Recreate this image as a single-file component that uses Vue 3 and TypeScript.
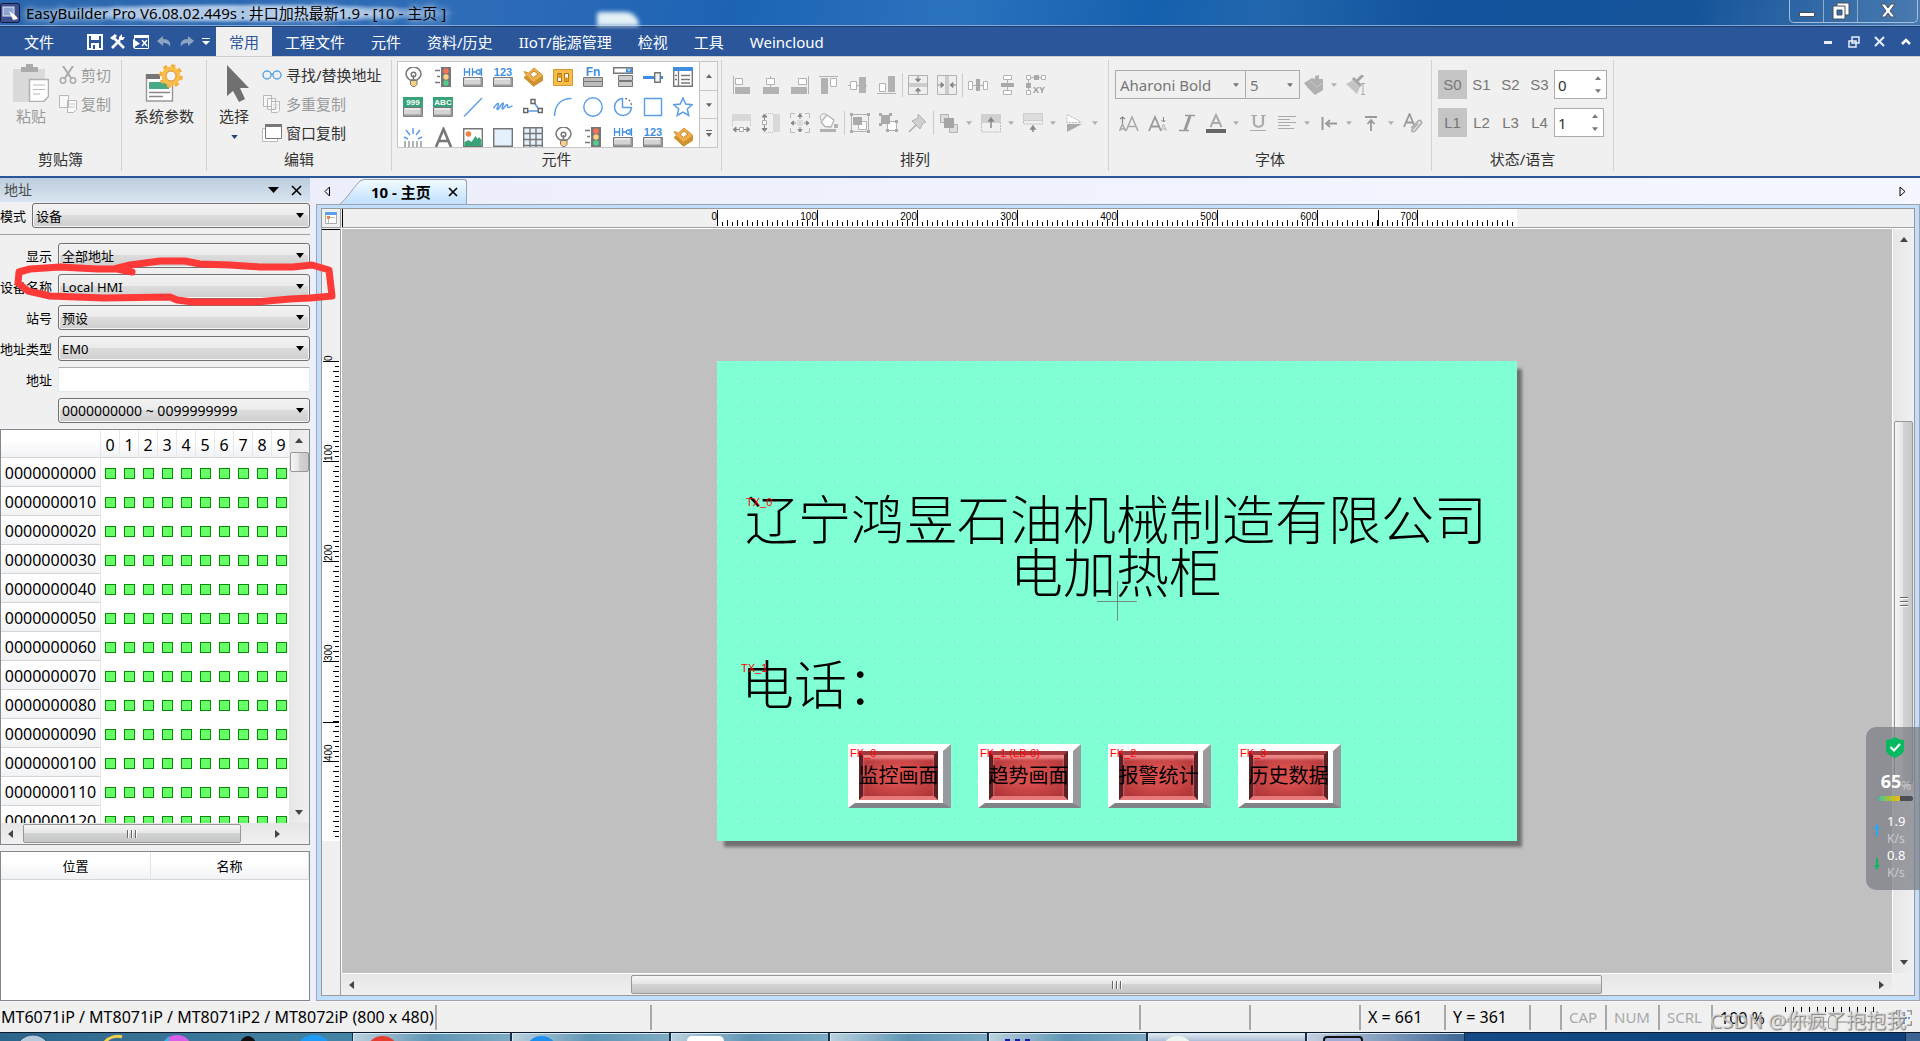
<script setup lang="ts">
interface Tool {
  icon: string
  label: string
  menu?: boolean
}

const menus: string[] = ['工程文件', '元件', '资料/历史', 'IIoT/能源管理', '检视', '工具', 'Weincloud']

const galleryIcons: string[] = [
  'bulb', 'traffic', 'setword', 'num', 'tag', 'toggle', 'fn', 'combo', 'slider', 'list',
  'n999', 'abc', 'line', 'wave', 'poly', 'arc', 'circle', 'pie', 'rect', 'star',
  'scale', 'letter', 'picture', 'frame', 'table', 'bulb', 'traffic', 'setword', 'num', 'tag',
]

const arrangeTop: Tool[][] = [
  [
    { icon: 'al-left', label: '靠左' }, { icon: 'al-center', label: '水平居中' }, { icon: 'al-right', label: '靠右' },
    { icon: 'al-top', label: '靠上' }, { icon: 'al-mid', label: '垂直居中' }, { icon: 'al-bottom', label: '靠下' },
  ],
  [{ icon: 'cen-v', label: '页面垂直居中' }, { icon: 'cen-h', label: '页面水平居中' }],
  [{ icon: 'dist-h', label: '水平等距' }, { icon: 'dist-v', label: '垂直等距' }, { icon: 'xy', label: '坐标' }],
]

const arrangeBottom: Tool[][] = [
  [
    { icon: 'same-w', label: '等宽' }, { icon: 'same-h', label: '等高' },
    { icon: 'same-wh', label: '等宽高' }, { icon: 'bucket', label: '填充' },
  ],
  [{ icon: 'group', label: '群组' }, { icon: 'ungroup', label: '取消群组' }, { icon: 'pin', label: '固定' }],
  [
    { icon: 'layer', label: '图层', menu: true }, { icon: 'lay-up', label: '上移', menu: true },
    { icon: 'lay-down', label: '下移', menu: true }, { icon: 'flip', label: '翻转', menu: true },
  ],
]

const fontTools: Tool[] = [
  { icon: 'grow', label: '放大' }, { icon: 'shrink', label: '缩小' }, { icon: 'italic', label: '斜体' },
  { icon: 'color', label: '颜色', menu: true }, { icon: 'under', label: '底线' },
  { icon: 'align', label: '对齐', menu: true }, { icon: 'indent', label: '左对齐', menu: true },
  { icon: 'vtop', label: '上对齐', menu: true }, { icon: 'fontset', label: '字型' },
]

const fields = [
  { id: 'show', label: '显示', value: '全部地址' },
  { id: 'device', label: '设备名称', value: 'Local HMI' },
  { id: 'station', label: '站号', value: '预设' },
  { id: 'type', label: '地址类型', value: 'EM0' },
]

const rows: string[] = Array.from({ length: 13 }, (_, i) => String(i * 10).padStart(10, '0'))
const digits: number[] = Array.from({ length: 10 }, (_, i) => i)

const tickPath = (length: number, vertical: boolean): string => {
  let d = ''
  for (let p = 0; p < length; p += 5) {
    const h = p % 100 === 0 ? 16 : p % 10 === 0 ? 6 : 4
    d += vertical ? `M${17 - h} ${p}h${h}v1h-${h}z` : `M${p} ${17 - h}h1v${h}h-1z`
  }
  return d
}
const topTicks = tickPath(800, false)
const leftTicks = tickPath(480, true)
const topLabels = [0, 100, 200, 300, 400, 500, 600, 700]
const leftLabels = [0, 100, 200, 300, 400]

const keys = [
  { tag: 'FK_0', text: '监控画面' },
  { tag: 'FK_1 (LB-0)', text: '趋势画面' },
  { tag: 'FK_2', text: '报警统计' },
  { tag: 'FK_3', text: '历史数据' },
]

const zoomTicks = Array.from({ length: 12 }, (_, i) => i * 8)
</script>

<template>
  <svg class="defs" aria-hidden="true">
    <symbol id="dn" viewBox="0 0 8 5"><path d="M0 0h8L4 5z" fill="currentColor" /></symbol>
    <symbol id="up" viewBox="0 0 8 5"><path d="M0 5h8L4 0z" fill="currentColor" /></symbol>

    <symbol id="bulb" viewBox="0 0 20 20">
      <path d="M7 13C4.500 11 3 9.500 3 7a7 6.500 0 0 1 15 0c0 2.500-1.500 4-4 6z" fill="#fff" stroke="#777" stroke-width="1.500" />
      <circle cx="10.500" cy="7.500" r="2.300" fill="none" stroke="#777" stroke-width="1.500" /><path d="M10.500 8v5" stroke="#777" stroke-width="1.500" />
      <path d="M7.500 13.500h6.500v4l-2 2h-2.500l-2-2z" fill="#ffcf85" stroke="#777" />
    </symbol>
    <symbol id="traffic" viewBox="0 0 20 20">
      <path d="M2 3.500h5M4 9.500h3M2 15.500h5" stroke="#777" stroke-width="1.500" /><path d="M8 0h10v20H8z" fill="#777" />
      <circle cx="13" cy="4" r="2.700" fill="#ff7058" /><circle cx="13" cy="10" r="2.700" fill="#ffcf85" /><circle cx="13" cy="16" r="2.700" fill="#4cd08c" />
    </symbol>
    <symbol id="key" viewBox="0 0 20 20">
      <path d="M.5 10.500h19v9H.5z" fill="#d4d4d4" stroke="#777" /><path d="M1 18.500h18M18.500 11v8" stroke="#999" stroke-width="2" /><path d="M2 11.500h15v1H2z" fill="#fff" />
    </symbol>
    <symbol id="setword" viewBox="0 0 20 20">
      <path d="M1.500 1v8M1.500 5h5M6.500 1v8M9.500 1v8M9.500 5h4M13.500 3v4M14 3h3v4h-3M18.500 1v8" stroke="#3f8fde" stroke-width="1.300" fill="none" /><use href="#key" />
    </symbol>
    <symbol id="num" viewBox="0 0 20 20"><text x="10" y="9" text-anchor="middle" class="g10" fill="#3f8fde">123</text><use href="#key" /></symbol>
    <symbol id="tag" viewBox="0 0 20 20">
      <path d="M1 4.500 5.500 6 11 1l8.500 7v5.500L10.500 19 1 10.500 3.500 8.500z" fill="#efb04a" stroke="#d0922f" />
      <path d="m7 7.500 4-3.500 4 3-4.500 3.500z" fill="#fff" stroke="#c78726" /><path d="m3.500 8.500 7 6.500 9-6.500v5l-9 6L1 10.500z" fill="#cf9233" />
    </symbol>
    <symbol id="toggle" viewBox="0 0 20 20">
      <path d="M.5 2.500h19v16H.5z" fill="#fbbd4a" stroke="#d39a31" /><path d="M4.500 6.500h4v8h-4zM11.500 6.500h4v8h-4z" fill="#fff" stroke="#a66f12" /><path d="M4.500 7h4v4h-4zM11.500 10.500h4v4h-4z" fill="#d99a2b" />
    </symbol>
    <symbol id="fn" viewBox="0 0 20 20">
      <text x="10" y="9" text-anchor="middle" class="g12" fill="#3f8fde">Fn</text><path d="M.5 10.500h19v9H.5z" fill="#bbb" stroke="#777" /><path d="M0 14.500h20" stroke="#777" />
    </symbol>
    <symbol id="combo" viewBox="0 0 20 20">
      <path d="M.7.700h18.600v5.600H.7z" fill="#fff" stroke="#777" stroke-width="1.400" /><path d="M13 1.500h6v4h-6z" fill="#3f8fde" /><path d="m14.500 2.500 1.500 2 1.500-2z" fill="#fff" />
      <path d="M5.500 8.500h14v5h-14zM5.500 14.500h14v5h-14z" fill="#ccc" stroke="#777" />
    </symbol>
    <symbol id="slider" viewBox="0 0 20 20"><path d="M0 9h20v3H0z" fill="#3f8fde" /><path d="M11.700 5.700h5.600v9.600h-5.600z" fill="#f1f1f1" stroke="#777" stroke-width="1.400" /></symbol>
    <symbol id="list" viewBox="0 0 20 20">
      <path d="M.7 1.700h18.600v17.600H.7z" fill="#fff" stroke="#777" stroke-width="1.400" /><path d="M0 0h20v4H0z" fill="#3f8fde" />
      <path d="M5.500 4v15M8 8.500h9M8 12.500h9M8 16h9M2 8.500h2M2 12.500h2" stroke="#777" stroke-width="1.300" />
    </symbol>
    <symbol id="n999" viewBox="0 0 20 20"><path d="M0 0h20v10H0z" fill="#36a378" /><text x="10" y="8" text-anchor="middle" class="g8" fill="#fff">999</text><use href="#key" /></symbol>
    <symbol id="abc" viewBox="0 0 20 20"><path d="M0 0h20v10H0z" fill="#36a378" /><text x="10" y="8" text-anchor="middle" class="g8" fill="#fff">ABC</text><use href="#key" /></symbol>
    <symbol id="line" viewBox="0 0 20 20"><path d="M1 19.500 19 1" stroke="#5b9ee6" stroke-width="1.400" /></symbol>
    <symbol id="wave" viewBox="0 0 20 20"><path d="M.5 11.500C3 7 5.500 5.500 5.500 7s-2.500 5.500-1 5.500S8.500 6 10 6s-2 6-.5 6 3-4.500 4.500-4.500-.5 3 1.500 3 2-1.500 4-1.500" fill="none" stroke="#5b9ee6" stroke-width="1.500" /></symbol>
    <symbol id="poly" viewBox="0 0 20 20"><path d="M3 14h14M10 4l7 10" stroke="#5b9ee6" stroke-width="1.500" /><path d="M8 2.500h4v4H8zM.7 11.500h4v4h-4zM15.300 11.500h4v4h-4z" fill="#fff" stroke="#666" stroke-width="1.400" /></symbol>
    <symbol id="arc" viewBox="0 0 20 20"><path d="M1.500 19C2 8 8 1.500 18.500 1.500" fill="none" stroke="#5b9ee6" stroke-width="1.500" /></symbol>
    <symbol id="circle" viewBox="0 0 20 20"><circle cx="10" cy="10" r="9.200" fill="none" stroke="#5b9ee6" stroke-width="1.400" /></symbol>
    <symbol id="pie" viewBox="0 0 20 20"><path d="M9.500 1.500a8.500 8.500 0 1 0 9 9h-9z" fill="none" stroke="#5b9ee6" stroke-width="1.500" /><path d="M12 1.500c3.500 0 6 3 6.500 7" fill="none" stroke="#777" stroke-dasharray="2 2" stroke-width="1.300" /></symbol>
    <symbol id="rect" viewBox="0 0 20 20"><path d="M1.500 1.500h17v17h-17z" fill="none" stroke="#5b9ee6" stroke-width="1.400" /></symbol>
    <symbol id="star" viewBox="0 0 20 20"><path d="m10 1 2.700 6 6.500.7-4.900 4.300 1.400 6.500-5.700-3.400-5.700 3.400L5.700 12 .8 7.700 7.300 7z" fill="#fff" stroke="#5b9ee6" stroke-width="1.500" /></symbol>
    <symbol id="scale" viewBox="0 0 20 20"><path d="M10 1v6M3 3l4 5M17 3l-4 5M1 10l4 2M19 10l-4 2" stroke="#5b9ee6" stroke-width="1.500" /><path d="M2 20v-6M6 20v-6M10 20v-6M14 20v-6M18 20v-6" stroke="#999" stroke-width="1.500" /></symbol>
    <symbol id="letter" viewBox="0 0 20 20"><path d="M3 20 10.500 2 18 20M6 14h9" fill="none" stroke="#777" stroke-width="2.600" /></symbol>
    <symbol id="picture" viewBox="0 0 20 20"><path d="M.7 1.700h18.600v17.600H.7z" fill="#fff" stroke="#777" stroke-width="1.400" /><circle cx="5.500" cy="7" r="2.800" fill="#e98444" /><path d="M1.500 19v-4l4-2 3 2 4-6 2 3 1.500-2 2.500 3v6z" fill="#36a378" /></symbol>
    <symbol id="frame" viewBox="0 0 20 20"><path d="M.7 1.700h18.600v17.600H.7z" fill="#e4f0fc" stroke="#777" stroke-width="1.400" /></symbol>
    <symbol id="table" viewBox="0 0 20 20"><path d="M.7.700h18.600v20H.7zM1 6.500h18M1 12.500h18M1 18.500h18M7 1v19M13 1v19" fill="#e4f0fc" stroke="#777" stroke-width="1.400" /></symbol>

    <symbol id="al-left" viewBox="0 0 20 20"><path d="M1.500 1v18" stroke="#b2b2b2" /><path d="M3.500 3.500h7v6h-7z" fill="#fff" stroke="#b2b2b2" /><path d="M3 12h15v7H3z" fill="#b2b2b2" /></symbol>
    <symbol id="al-center" viewBox="0 0 20 20"><path d="M9.500 1v18" stroke="#b2b2b2" /><path d="M5.500 3.500h8v6h-8z" fill="#fff" stroke="#b2b2b2" /><path d="M2 12h16v7H2z" fill="#b2b2b2" /></symbol>
    <symbol id="al-right" viewBox="0 0 20 20"><path d="M18.500 1v18" stroke="#b2b2b2" /><path d="M8.500 3.500h8v6h-8z" fill="#fff" stroke="#b2b2b2" /><path d="M1 12h16v7H1z" fill="#b2b2b2" /></symbol>
    <symbol id="al-top" viewBox="0 0 20 20"><path d="M0 1.500h19" stroke="#b2b2b2" /><path d="M11.500 3.500h6v8h-6z" fill="#fff" stroke="#b2b2b2" /><path d="M2 3h7v16H2z" fill="#b2b2b2" /></symbol>
    <symbol id="al-mid" viewBox="0 0 20 20"><path d="M0 10.500h19" stroke="#b2b2b2" /><path d="M2.500 6.500h6v8h-6z" fill="#fff" stroke="#b2b2b2" /><path d="M11 2h7v16h-7z" fill="#b2b2b2" /></symbol>
    <symbol id="al-bottom" viewBox="0 0 20 20"><path d="M0 18.500h19" stroke="#b2b2b2" /><path d="M2.500 8.500h6v8h-6z" fill="#fff" stroke="#b2b2b2" /><path d="M11 1h7v16h-7z" fill="#b2b2b2" /></symbol>
    <symbol id="cen-v" viewBox="0 0 20 20"><path d="M.5.500h19v19H.5z" fill="#eee" stroke="#b2b2b2" /><path d="M1 8h18v4H1z" fill="#ccc" /><path d="M10 1v5M7.500 4 10 7l2.500-3zM10 19v-5M7.500 16l2.500-3 2.500 3z" fill="#888" stroke="#888" /></symbol>
    <symbol id="cen-h" viewBox="0 0 20 20"><path d="M.5.500h19v19H.5z" fill="#eee" stroke="#b2b2b2" /><path d="M8 1h4v18H8z" fill="#ccc" /><path d="M1 10h5M4 7.500 7 10l-3 2.500zM19 10h-5M16 7.500 13 10l3 2.500z" fill="#888" stroke="#888" /></symbol>
    <symbol id="dist-h" viewBox="0 0 20 20"><path d="M0 10.500h20" stroke="#b2b2b2" /><path d="M.5 6.500h4v8h-4zM15.500 6.500h4v8h-4z" fill="#fff" stroke="#b2b2b2" /><path d="M8 4h4v12H8z" fill="#aaa" /></symbol>
    <symbol id="dist-v" viewBox="0 0 20 20"><path d="M10.500 0v20" stroke="#b2b2b2" /><path d="M6.500.500h8v4h-8zM6.500 15.500h8v4h-8z" fill="#fff" stroke="#b2b2b2" /><path d="M4 8h13v4H4z" fill="#aaa" /></symbol>
    <symbol id="xy" viewBox="0 0 20 20"><path d="M2.500 2v16M2 2.500h16" stroke="#b2b2b2" /><path d="M.5.500h4v4h-4zM15.500.500h4v4h-4zM.5 15.500h4v4h-4z" fill="#fff" stroke="#b2b2b2" /><path d="M8 0h5v5H8zM0 8h5v5H0z" fill="#aaa" /><text x="13" y="18" text-anchor="middle" class="g9" fill="#999">XY</text></symbol>
    <symbol id="same-w" viewBox="0 0 20 20"><path d="M0 1h19v7H0z" fill="#d8d8d8" /><path d="M.5 8v5M18.500 8v5" stroke="#bbb" stroke-dasharray="1 1" /><path d="M2 16.500h15M4 14l-3 2.500L4 19zM15 14l3 2.500-3 2.500z" stroke="#888" fill="#888" /><path d="M7.500 14.500h4v4h-4z" fill="#fff" stroke="#aaa" /></symbol>
    <symbol id="same-h" viewBox="0 0 20 20"><path d="M12 1h7v18h-7z" fill="#d8d8d8" /><path d="M5 .5h7M5 19.500h7" stroke="#bbb" stroke-dasharray="1 1" /><path d="M3.500 2v15M1 4l2.500-3L6 4zM1 15.500l2.500 3 2.500-3z" stroke="#888" fill="#888" /><path d="M1.500 7.500h4v4h-4z" fill="#fff" stroke="#aaa" /></symbol>
    <symbol id="same-wh" viewBox="0 0 20 20"><path d="M.5 5V.5H5M9 .5h3M15 .5h4.500V5M19.500 15v4.500H15M5 19.500H.5V15" fill="none" stroke="#bbb" /><path d="M7 7h6v6H7z" fill="#ddd" /><path d="M10 1v5M8 3.500 10 1l2 2.500zM10 19v-5M8 16.500l2 2.500 2-2.500zM1 10h5M3.500 8 1 10l2.500 2zM19 10h-5M16.500 8l2.500 2-2.500 2z" stroke="#888" fill="#888" /></symbol>
    <symbol id="bucket" viewBox="0 0 20 20"><path d="m2 9 6-7 7 5-3 7-6-.5z" fill="#fff" stroke="#b2b2b2" stroke-width="1.300" /><path d="M2 7C-1 2 4-1 8 2" fill="none" stroke="#b2b2b2" /><path d="M15 11h4v4h-4zM1 16h16v3H1z" fill="#b2b2b2" /></symbol>
    <symbol id="group" viewBox="0 0 20 20"><path d="M1.500 1.500h17v17h-17z" fill="none" stroke="#b2b2b2" /><path d="M0 0h3v3H0zM17 0h3v3h-3zM0 17h3v3H0zM17 17h3v3h-3z" fill="#aaa" /><path d="M8.500 8.500h8v8h-8z" fill="#fff" stroke="#b2b2b2" /><path d="M3 4h9v8H3z" fill="#aaa" /></symbol>
    <symbol id="ungroup" viewBox="0 0 20 20"><path d="M8.500 8.500h9v9h-9z" fill="#fff" stroke="#b2b2b2" /><path d="M2 2h9v9H2zM0 0h3v3H0zM10 0h3v3h-3zM0 10h3v3H0zM16 7h3v3h-3zM7 16h3v3H7zM16 16h3v3h-3z" fill="#aaa" /></symbol>
    <symbol id="pin" viewBox="0 0 20 20"><path d="m1 19 8-8" stroke="#aaa" stroke-width="1.500" /><path d="m10 1 8 8-3 1-3 6-8-8 6-3z" fill="#d0d0d0" stroke="#b2b2b2" /></symbol>
    <symbol id="layer" viewBox="0 0 20 20"><path d="M1.500 1.500h8v8h-8zM10.500 11.500h8v8h-8z" fill="#ddd" stroke="#b2b2b2" /><path d="M5 5h10v10H5z" fill="#a5a5a5" /></symbol>
    <symbol id="lay-up" viewBox="0 0 20 20"><path d="M0 1h20v9H0z" fill="#d0d0d0" /><path d="M.5 10v9h19v-9" fill="none" stroke="#bbb" stroke-dasharray="2 1" /><path d="M10 15V6M8 8l2-3 2 3z" stroke="#888" stroke-width="1.500" fill="#888" /></symbol>
    <symbol id="lay-down" viewBox="0 0 20 20"><path d="M.5.500h19v7H.5z" fill="#ddd" stroke="#ccc" /><path d="M.5 8v3h19V8" fill="none" stroke="#bbb" stroke-dasharray="2 1" /><path d="M10 19v-5M8 16l2-3 2 3z" stroke="#888" stroke-width="1.500" fill="#888" /></symbol>
    <symbol id="flip" viewBox="0 0 20 20"><path d="M2 9.500V1.500l15 8z" fill="#fff" stroke="#bbb" stroke-dasharray="2 1" /><path d="M2 11h15L2 19z" fill="#aaa" /></symbol>

    <symbol id="grow" viewBox="0 0 20 20"><path d="m7 18 6-14 6 14M9 13.500h8M.500 18l3-7 3 7M1.500 16h4" fill="none" stroke="#aaa" stroke-width="1.600" /><path d="M3.500 4v6M1 6l2.500-2L6 6" fill="none" stroke="#888" stroke-width="1.200" /></symbol>
    <symbol id="shrink" viewBox="0 0 20 20"><path d="m1 18 6-14 6 14M3 13.500h8" fill="none" stroke="#999" stroke-width="1.800" /><path d="m13 18 2.500-7 3 7M14 16h4" fill="none" stroke="#b2b2b2" /><path d="M15.500 4v5M13.500 7l2 2 2-2" fill="none" stroke="#888" /></symbol>
    <symbol id="italic" viewBox="0 0 20 20"><path d="M8 2.500h10M2 17.500h10" stroke="#999" stroke-width="1.300" /><path d="m13 3-5 14" stroke="#999" stroke-width="3" /></symbol>
    <symbol id="color" viewBox="0 0 20 20"><path d="m4.500 14 5.500-12 5.500 12M6.500 10h7" fill="none" stroke="#aaa" stroke-width="2" /><path d="M0 16h20v4H0z" fill="#666" /></symbol>
    <symbol id="under" viewBox="0 0 20 20"><path d="M3 2.500h6M13 2.500h5" stroke="#aaa" stroke-width="1.200" /><path d="M6 3v7c0 5 9 5 9 0V3" fill="none" stroke="#aaa" stroke-width="2.200" /><path d="M2 17.500h16" stroke="#aaa" /></symbol>
    <symbol id="align" viewBox="0 0 20 20"><path d="M1 3.500h18M1 6.500h12M1 9.500h18M1 12.500h12M1 15.500h16" stroke="#aaa" /></symbol>
    <symbol id="indent" viewBox="0 0 20 20"><path d="M3.500 4v13" stroke="#999" stroke-width="2" /><path d="M7 10.500h11M11 7l-4 3.500 4 3.500" stroke="#999" stroke-width="1.800" fill="none" /></symbol>
    <symbol id="vtop" viewBox="0 0 20 20"><path d="M4 4h12" stroke="#999" stroke-width="2" /><path d="M10 18V8M6.500 11 10 7l3.500 4" stroke="#999" stroke-width="1.800" fill="none" /></symbol>
    <symbol id="fontset" viewBox="0 0 20 20"><path d="m1 14 5.500-13L12 14M3 9.500h7" fill="none" stroke="#999" stroke-width="1.800" /><path d="m8 15 7-7c2-2 5 1 3 3l-6 7c-2 2-4 0-3-1.500l6-6" fill="#ddd" stroke="#aaa" stroke-width="1.400" /></symbol>
    <symbol id="brush" viewBox="0 0 20 20"><path d="M0 8 8 3l3 1V1l4-1v4h4v11l-8 5-7-7z" fill="#b0b0b0" /><path d="m6 6 7 6 5-4" fill="none" stroke="#ccc" /></symbol>
    <symbol id="brush2" viewBox="0 0 20 20"><path d="m0 9 7-4 7 7-3 7z" fill="#c4c4c4" /><path d="m7 3 8 8M11 6l6-6" stroke="#a5a5a5" stroke-width="3" /><path d="M17 9v10M15 8.500h4M15 19.500h4" stroke="#aaa" /></symbol>
  </svg>

  <div class="app">
    <header class="title">
      <svg class="appicon" viewBox="0 0 20 20"><rect x=".5" y=".5" width="19" height="19" rx="2" fill="#3d4f8c" stroke="#10183c" /><rect x="3" y="4" width="11" height="9" fill="#8ea2d0" stroke="#dfe6f8" /><path d="m9 8 7 5 2 3-5 1z" fill="#fff" /></svg>
      <span class="title-text">EasyBuilder Pro V6.08.02.449s : 井口加热最新1.9 - [10 - 主页 ]</span>
      <i class="glow"></i>
      <div class="winbtns">
        <button aria-label="最小化"><svg width="18" height="18" viewBox="0 0 18 18"><path d="M1.500 10.500h15v4h-15z" fill="#fff" stroke="#47505f" /></svg></button>
        <button aria-label="还原"><svg width="18" height="18" viewBox="0 0 18 18"><path d="M5 1h12v12H5z" fill="#fff" stroke="#47505f" /><path d="M1 4h12v13H1z" fill="#fff" stroke="#47505f" /><path d="M5 8h5v5H5z" fill="#3c6aa4" stroke="#47505f" /></svg></button>
        <button class="close" aria-label="关闭"><svg width="18" height="18" viewBox="0 0 18 18"><path d="M2 2h4l3 4 3-4h4l-5 7 5 6h-4l-3-4-3 4H2l5-6z" fill="#fff" stroke="#47505f" /></svg></button>
      </div>
    </header>

    <nav class="menubar">
      <button class="file">文件</button>
      <div class="quick">
        <svg width="16" height="16" viewBox="0 0 16 16"><path d="M1 1h14v14H1z" fill="none" stroke="#fff" stroke-width="2" /><path d="M4 1h8v5H4zM4 9h8v6H4z" fill="#fff" /><path d="M6 11h2v4H6z" fill="#2b579a" /></svg>
        <svg width="16" height="16" viewBox="0 0 16 16"><path d="m3 3 11 11M2 14l8-8" stroke="#fff" stroke-width="2.600" /><path d="M0 4 5 0l2 2-4 4zM9 3l3-3v3h3l-2 3H9z" fill="#fff" /></svg>
        <svg width="16" height="16" viewBox="0 0 16 16"><path d="M1.500 1.500h14v13h-14z" fill="none" stroke="#fff" /><path d="M1 1h15v3H1z" fill="#fff" /><path d="m0 5 7 4.500L0 14z" fill="#fff" /><path d="m9 6 5 6M14 6l-5 6" stroke="#fff" stroke-width="1.500" /></svg>
        <svg width="16" height="16" viewBox="0 0 16 16"><path d="m1 7 6-5v3c6 0 8 3 7 8-1-3-3-4-7-4v3z" fill="#8da3c2" /></svg>
        <svg width="16" height="16" viewBox="0 0 16 16"><path d="M15 7 9 2v3c-6 0-8 3-7 8 1-3 3-4 7-4v3z" fill="#8da3c2" /></svg>
        <svg width="8" height="8" viewBox="0 0 8 8"><path d="M0 0h8v1H0zM0 3h8L4 7z" fill="#fff" /></svg>
      </div>
      <button class="tab-on">常用</button>
      <button v-for="m in menus" :key="m" class="menu">{{ m }}</button>
      <div class="mdi">
        <svg width="12" height="12" viewBox="0 0 12 12"><path d="M2 5h8v3H2z" fill="#e8eef8" /></svg>
        <svg width="12" height="12" viewBox="0 0 12 12"><path d="M4 1h7v6H4zM1 5h7v6H1z" fill="#2b579a" stroke="#e8eef8" stroke-width="1.500" /></svg>
        <svg width="12" height="12" viewBox="0 0 12 12"><path d="m1 1 9 9M10 1l-9 9" stroke="#e8eef8" stroke-width="2" /></svg>
        <svg width="12" height="12" viewBox="0 0 12 12"><path d="m2 8 4-4 4 4" fill="none" stroke="#fff" stroke-width="2.500" /></svg>
      </div>
    </nav>

    <section class="ribbon">
      <div class="grp clip">
        <div class="body">
          <button class="big dim">
            <svg width="36" height="38" viewBox="0 0 36 38"><path d="M0 5h32v33H0z" fill="#dadada" /><path d="M8 3h5V0h7v3h5v5H8z" fill="#aaa" /><path d="M16.500 15.500h19v17l-5 5h-14z" fill="#fff" stroke="#b0b0b0" stroke-width="1.500" /><path d="M20 21h12M20 25.500h12M20 30h7" stroke="#bbb" /></svg>
            <span>粘贴</span>
          </button>
          <div class="stack">
            <button class="small dim"><svg width="18" height="18" viewBox="0 0 18 18"><path d="m4 0 8 12M14 0 6 12" stroke="#aaa" stroke-width="2" /><circle cx="4" cy="14.500" r="2.700" fill="none" stroke="#aaa" stroke-width="1.500" /><circle cx="14" cy="14.500" r="2.700" fill="none" stroke="#aaa" stroke-width="1.500" /></svg>剪切</button>
            <button class="small dim"><svg width="18" height="18" viewBox="0 0 18 18"><path d="M.5.500h9v12h-9zM8.500 5.500h9v9l-3 3h-6z" fill="#f8f8f8" stroke="#b8b8b8" /><path d="M10 9h6M10 12h6" stroke="#ccc" /></svg>复制</button>
          </div>
        </div>
        <div class="cap">剪贴簿</div>
      </div>
      <div class="grp sys">
        <div class="body">
          <button class="big">
            <svg width="38" height="38" viewBox="0 0 38 38"><path d="M1.500 11h26v26h-26z" fill="#fff" stroke="#999" stroke-width="1.500" /><path d="M1 10h14v5H1z" fill="#777" /><path d="M4 18h20v7H4z" fill="#48aa84" /><path d="M4 28.500h21M4 32.500h14" stroke="#888" stroke-width="1.500" /><circle cx="26" cy="12" r="9.500" fill="#fbbd4a" /><circle cx="26" cy="12" r="10.500" fill="none" stroke="#f2ad36" stroke-width="2.600" stroke-dasharray="4.200 4" /><circle cx="26" cy="12" r="5" fill="#f5f5f5" stroke="#d2953a" /></svg>
            <span>系统参数</span>
          </button>
        </div>
        <div class="cap"></div>
      </div>
      <div class="grp edit">
        <div class="body">
          <button class="big">
            <svg width="36" height="38" viewBox="0 0 36 38"><path d="M11 1v31l6-5 6 11 6-3-5-11h9z" fill="#707070" /></svg>
            <span>选择</span>
            <svg class="navy" width="7" height="4"><use href="#dn" /></svg>
          </button>
          <div class="stack">
            <button class="small"><svg width="20" height="18" viewBox="0 0 20 18"><circle cx="5" cy="9" r="4" fill="none" stroke="#5aa5e0" stroke-width="1.400" /><circle cx="15" cy="9" r="4" fill="none" stroke="#5aa5e0" stroke-width="1.400" /><path d="M9 8h2" stroke="#5aa5e0" stroke-width="1.400" /></svg>寻找/替换地址</button>
            <button class="small dim"><svg width="20" height="18" viewBox="0 0 20 18"><path d="M1.500.500h8v11h-8zM5.500 3.500h8v11h-8zM9.500 6.500h8v9l-2 2h-6z" fill="#f8f8f8" stroke="#b8b8b8" /><path d="M11 10h5M11 13h5" stroke="#ccc" /></svg>多重复制</button>
            <button class="small"><svg width="20" height="18" viewBox="0 0 20 18"><path d="M.5 4.500h15v13H.5z" fill="#fff" stroke="#bbb" /><path d="M3.500.500h16v14h-16z" fill="#fff" stroke="#777" /><path d="M3 0h17v3H3z" fill="#777" /></svg>窗口复制</button>
          </div>
        </div>
        <div class="cap">编辑</div>
      </div>
      <div class="grp parts">
        <div class="body">
          <div class="gallery">
            <div class="cells">
              <svg v-for="(g, i) in galleryIcons" :key="i" width="20" height="20"><use :href="'#' + g" /></svg>
            </div>
            <div class="gscroll">
              <button aria-label="上一行"><svg width="6" height="4"><use href="#up" /></svg></button>
              <button aria-label="下一行"><svg width="6" height="4"><use href="#dn" /></svg></button>
              <button aria-label="更多"><svg width="6" height="7" viewBox="0 0 6 7"><path d="M0 0h6v1H0zM0 3h6L3 7z" fill="#666" /></svg></button>
            </div>
          </div>
        </div>
        <div class="cap">元件</div>
      </div>
      <div class="grp arrange">
        <div class="body rowsbody">
          <div class="toolrow">
            <div v-for="(set, i) in arrangeTop" :key="i" class="set">
              <button v-for="t in set" :key="t.icon" class="tool" :aria-label="t.label"><svg width="20" height="20"><use :href="'#' + t.icon" /></svg></button>
            </div>
          </div>
          <div class="toolrow">
            <div v-for="(set, i) in arrangeBottom" :key="i" class="set">
              <button v-for="t in set" :key="t.icon" class="tool" :aria-label="t.label">
                <svg width="20" height="20"><use :href="'#' + t.icon" /></svg><svg v-if="t.menu" class="caret" width="6" height="4"><use href="#dn" /></svg>
              </button>
            </div>
          </div>
        </div>
        <div class="cap">排列</div>
      </div>
      <div class="grp font">
        <div class="body rowsbody">
          <div class="toolrow">
            <div class="flat face"><select aria-label="字体"><option>Aharoni Bold</option></select><svg width="6" height="4"><use href="#dn" /></svg></div>
            <div class="flat size"><select aria-label="字号"><option>5</option></select><svg width="6" height="4"><use href="#dn" /></svg></div>
            <button class="tool" aria-label="复制格式"><svg width="20" height="20"><use href="#brush" /></svg><svg class="caret" width="6" height="4"><use href="#dn" /></svg></button>
            <button class="tool" aria-label="文字格式"><svg width="20" height="20"><use href="#brush2" /></svg></button>
          </div>
          <div class="toolrow">
            <button v-for="t in fontTools" :key="t.icon" class="tool" :aria-label="t.label">
              <svg width="20" height="20"><use :href="'#' + t.icon" /></svg><svg v-if="t.menu" class="caret" width="6" height="4"><use href="#dn" /></svg>
            </button>
          </div>
        </div>
        <div class="cap">字体</div>
      </div>
      <div class="grp state">
        <div class="body rowsbody">
          <div class="toolrow">
            <button v-for="n in 4" :key="n" class="st" :class="{ on: n === 1 }">S{{ n - 1 }}</button>
            <div class="spin wide"><input aria-label="状态" value="0" /><div class="ud"><svg width="6" height="4"><use href="#up" /></svg><svg width="6" height="4"><use href="#dn" /></svg></div></div>
          </div>
          <div class="toolrow">
            <button v-for="n in 4" :key="n" class="st" :class="{ on: n === 1 }">L{{ n }}</button>
            <div class="spin"><input aria-label="语言" value="1" /><div class="ud"><svg width="6" height="4"><use href="#up" /></svg><svg width="6" height="4"><use href="#dn" /></svg></div></div>
          </div>
        </div>
        <div class="cap">状态/语言</div>
      </div>
    </section>

    <main class="work">
      <aside class="dock">
        <div class="dock-head">
          <span>地址</span>
          <svg width="11" height="6" viewBox="0 0 11 6"><path d="M0 0h11L5.500 6z" /></svg>
          <svg width="11" height="11" viewBox="0 0 11 11"><path d="m1 1 9 9M10 1l-9 9" stroke="#000" stroke-width="1.600" /></svg>
        </div>
        <div class="mode">
          <label for="mode">模式</label>
          <div class="combo"><select id="mode"><option>设备</option></select><svg width="8" height="5"><use href="#dn" /></svg></div>
        </div>
        <div class="form">
          <template v-for="f in fields" :key="f.id">
            <label :for="f.id">{{ f.label }}</label>
            <div class="combo"><select :id="f.id"><option>{{ f.value }}</option></select><svg width="8" height="5"><use href="#dn" /></svg></div>
          </template>
          <label for="addr">地址</label>
          <input id="addr" type="text" />
          <span></span>
          <div class="combo"><select class="lg" aria-label="地址范围"><option>0000000000 ~ 0099999999</option></select><svg width="8" height="5"><use href="#dn" /></svg></div>
        </div>
        <div class="grid-box">
          <div class="grid-top">
            <div class="grid-clip">
              <table class="bits">
                <thead><tr><th class="rowh"></th><th v-for="d in digits" :key="d">{{ d }}</th></tr></thead>
                <tbody>
                  <tr v-for="r in rows" :key="r"><th class="rowh">{{ r }}</th><td v-for="d in digits" :key="d"><i></i></td></tr>
                </tbody>
              </table>
            </div>
            <div class="vbar">
              <svg width="8" height="5"><use href="#up" /></svg><div class="thumb small-thumb"></div><span class="grow"></span><svg width="8" height="5"><use href="#dn" /></svg>
            </div>
          </div>
          <div class="hbar dockbar">
            <svg width="5" height="8" viewBox="0 0 5 8"><path d="M5 0v8L0 4z" fill="currentColor" /></svg>
            <div class="thumb dock-thumb"><b></b></div>
            <span class="grow"></span>
            <svg width="5" height="8" viewBox="0 0 5 8"><path d="M0 0v8l5-4z" fill="currentColor" /></svg>
          </div>
        </div>
        <div class="places">
          <table><thead><tr><th class="pos">位置</th><th>名称</th></tr></thead></table>
        </div>
      </aside>

      <section class="docs">
        <div class="tabs">
          <svg width="6" height="11" viewBox="0 0 6 11"><path d="M5.500 1v9L1 5.500z" fill="none" stroke="#000" /></svg>
          <div class="doctab">
            <svg width="24" height="25" viewBox="0 0 24 25"><defs><linearGradient id="tg" x1="0" y1="0" x2="0" y2="1"><stop offset="0" stop-color="#f2faff" /><stop offset="1" stop-color="#bfe0fe" /></linearGradient></defs><path d="M0 25C6 21 16 5 20 2l4-1.500V25z" fill="url(#tg)" /><path d="M0 25C6 21 16 5 20 2l4-1.500" fill="none" stroke="#9aa0a8" /></svg>
            <div class="doclabel"><b>10 - 主页</b><svg width="10" height="10" viewBox="0 0 10 10"><path d="m1 1 8 8M9 1 1 9" stroke="#000" stroke-width="1.600" /></svg></div>
          </div>
          <span class="grow"></span>
          <svg width="7" height="11" viewBox="0 0 7 11"><path d="M1 1v9l5-4.500z" fill="none" stroke="#000" /></svg>
        </div>
        <div class="frame">
          <div class="inner">
            <div class="corner"><svg width="12" height="12" viewBox="0 0 12 12"><path d="M.5.500h11v11H.5z" fill="#fff" stroke="#aaa" /><path d="M0 0h12v3H0z" fill="#5aa0e8" /><path d="M2 4h3v3H2z" fill="#e98444" /><path d="M5 5.500h5M3.500 7v4" stroke="#bbb" /></svg></div>
            <div class="ruler-top">
              <svg width="800" height="18">
                <rect width="800" height="18" fill="#fff" />
                <path :d="topTicks" />
                <path d="M661 1h1v16h-1z" />
                <text v-for="n in topLabels" :key="n" :x="n" y="11" text-anchor="end">{{ n }}</text>
              </svg>
            </div>
            <div class="ruler-left">
              <svg width="18" height="480">
                <rect width="18" height="480" fill="#fff" />
                <path :d="leftTicks" />
                <path d="M1 361h16v1H1z" />
                <text v-for="n in leftLabels" :key="n" text-anchor="start" :transform="`translate(10 ${n}) rotate(-90)`">{{ n }}</text>
              </svg>
            </div>
            <div class="view">
              <div class="screen">
                <svg class="dots" width="100%" height="100%"><defs><pattern id="dot" width="20" height="20" patternUnits="userSpaceOnUse"><path d="M0 0h1v1H0z" fill="#e9fff6" /></pattern></defs><rect width="100%" height="100%" fill="url(#dot)" /></svg>
                <p class="obj heading">辽宁鸿昱石油机械制造有限公司<br />电加热柜</p>
                <p class="obj phone">电话：</p>
                <span class="obj tag tx0">TX_0</span>
                <span class="obj tag tx1">TX_1</span>
                <div class="obj keys">
                  <button v-for="k in keys" :key="k.tag" class="key"><span class="face-red">{{ k.text }}</span><span class="tag">{{ k.tag }}</span></button>
                </div>
                <svg class="obj cross" width="40" height="40" viewBox="0 0 40 40"><path d="M20 0h1v40h-1zM0 20h40v1H0z" fill="#6f8a80" /></svg>
              </div>
            </div>
            <div class="vbar viewbar">
              <svg width="8" height="5"><use href="#up" /></svg><span class="lead"></span><div class="thumb big-thumb"><b></b></div><span class="tail"></span><svg width="8" height="5"><use href="#dn" /></svg>
            </div>
            <div class="foot"></div>
            <div class="hbar viewh">
              <svg width="5" height="8" viewBox="0 0 5 8"><path d="M5 0v8L0 4z" fill="currentColor" /></svg>
              <span class="side"></span>
              <div class="thumb long-thumb"><b></b></div>
              <span class="side"></span>
              <svg width="5" height="8" viewBox="0 0 5 8"><path d="M0 0v8l5-4z" fill="currentColor" /></svg>
            </div>
          </div>
        </div>
      </section>
    </main>

    <footer class="status">
      <span class="s-model">MT6071iP / MT8071iP / MT8071iP2 / MT8072iP (800 x 480)</span>
      <span class="s-a"></span><span class="s-b"></span><span class="s-c"></span><span class="s-c"></span>
      <span class="s-x">X = 661</span><span class="s-x">Y = 361</span><span class="s-d"></span>
      <span class="s-cap off">CAP</span><span class="s-num off">NUM</span><span class="s-num off">SCRL</span>
      <span class="s-zoom">100 %
        <span class="zoomer">
          <svg width="90" height="5"><path v-for="t in zoomTicks" :key="t" :d="`M${t} 0h1v5h-1z`" /></svg>
          <input type="range" aria-label="缩放" min="0" max="100" value="52" />
        </span>
        <svg width="16" height="16" viewBox="0 0 16 16"><path d="M.7 5V.7H5M11 .7h4.300V5M15.300 11v4.300H11M5 15.300H.7V11" fill="none" stroke="#999" stroke-width="1.400" /><path d="M8 2v12M2 8h12" stroke="#5aa0e8" stroke-width="2" stroke-dasharray="4 1" /><path d="M7 7h2v2H7z" fill="#e98444" /></svg>
      </span>
    </footer>

    <div class="taskbar">
      <div class="pins">
        <svg width="352" height="9" viewBox="0 0 352 9"><ellipse cx="33" cy="18" rx="17" ry="16" fill="#b4c9da" stroke="#24506f" /><path d="M105 9c4-5 12-7 17-5" stroke="#f6d04b" stroke-width="3" fill="none" /><ellipse cx="177" cy="14" rx="14" ry="12" fill="#d95fe8" /><path d="M163 9l6-6v6z" fill="#39b6e8" /><ellipse cx="248" cy="12" rx="8" ry="9" fill="#111" /><ellipse cx="314" cy="12" rx="15" ry="10" fill="#1d9bf6" /></svg>
      </div>
      <button v-for="n in 7" :key="n" :class="'task t' + n" :aria-label="'窗口 ' + n"><i></i></button>
      <span class="grow"></span>
      <button class="peek" aria-label="显示桌面"></button>
    </div>

    <svg class="scribble" width="345" height="60" viewBox="0 252 345 60">
      <path d="M132 272 117 269 97 269 60 267 30 269 19 272 18 283 28 291 50 296 104 298 170 297 177 300 193 302 256 302 290 299 310 298 332 296 329 270 312 265 293 267 260 267 230 265 200 264 185 261 160 261 130 265 114 269" fill="none" stroke="#fd3a38" stroke-width="7" stroke-linejoin="round" stroke-linecap="round" />
    </svg>

    <aside class="monitor">
      <svg width="18" height="21" viewBox="0 0 18 21"><path d="M9 0c3 2 6 3 9 3v9c0 5-5 7-9 9-4-2-9-4-9-9V3c3 0 6-1 9-3z" fill="#06b960" /><path d="m4.500 10 3.500 3.500 6-6.500" fill="none" stroke="#fff" stroke-width="2.200" /></svg>
      <div class="load"><b>65</b><small>%</small></div>
      <div class="meter"><i></i></div>
      <div class="net"><svg width="6" height="12" viewBox="0 0 6 12"><path d="M3 0 6 5H4v7H2V5H0z" fill="#2aa7f0" /></svg><span>1.9<small>K/s</small></span></div>
      <div class="net"><svg width="6" height="12" viewBox="0 0 6 12"><path d="M3 12 0 7h2V0h2v7h2z" fill="#12b860" /></svg><span>0.8<small>K/s</small></span></div>
    </aside>

    <div class="mark">CSDN @你疯了抱抱我</div>
  </div>
</template>

<style>
body { margin: 0; background: #f0f0f0; }
</style>

<style scoped>
* { box-sizing: border-box; }
.app { position: relative; display: flex; flex-direction: column; height: 100vh; overflow: hidden; background: #f0f0f0; color: #000; font: 15px/20px "Noto Sans", "Noto Sans CJK SC", sans-serif; }
button { margin: 0; padding: 0; border: 0; background: none; font: inherit; color: inherit; }
select, input { margin: 0; border: 0; background: none; font: inherit; color: inherit; min-width: 0; }
svg { display: block; flex: none; }
.defs { display: none; }
.g8 { font: bold 8px "Liberation Sans", sans-serif; }
.g9 { font: bold 9px "Liberation Sans", sans-serif; }
.g10 { font: bold 11px "Liberation Sans", sans-serif; }
.g12 { font: bold 12px "Liberation Sans", sans-serif; }
.grow { flex: 1; }

.title { position: relative; display: flex; align-items: center; flex: none; height: 27px; gap: 6px; border-bottom: 1px solid #1d3d6b; box-shadow: inset 0 -1px #7fa9da; background: linear-gradient(100deg, #2a66ad 0, #2e6cb8 25%, #1d63b5 38%, #2b72be 50%, #1560ae 60%, #2267ae 66%, #10529c 75%, #15549a 88%, #4a7bb0 100%); }
.appicon { width: 20px; height: 22px; }
.title-text { white-space: nowrap; padding-right: 12px; background: radial-gradient(closest-side, #a6c2e4 60%, #a6c2e400); text-shadow: 0 0 6px #d5e4f5, 0 0 10px #c4d8ef; }
.glow { width: 42px; height: 14px; margin: 11px 0 0 133px; border-radius: 4px 20px 0 0; background: #e4f1f6; filter: blur(2px); }
.winbtns { display: flex; align-self: flex-start; margin: 0 2px 0 auto; border: 1px solid #a5bedb; border-top: 0; border-radius: 0 0 5px 5px; }
.winbtns button { display: flex; align-items: center; justify-content: center; width: 34px; height: 22px; border-right: 1px solid #8dadd1; }
.winbtns .close { width: 59px; border: 0; }

.menubar { display: flex; flex: none; height: 29px; background: #2b579a; color: #fff; padding-right: 6px; }
.file { width: 78px; }
.quick { display: flex; align-items: center; gap: 7px; width: 138px; padding-left: 9px; }
.tab-on { width: 56px; background: #f0f0f0; color: #2b579a; }
.menu { padding: 0 13px; }
.mdi { display: flex; align-items: center; gap: 14px; margin-left: auto; padding-right: 2px; }

.ribbon { display: flex; flex: none; height: 122px; padding: 3px 0 5px; border-top: 1px solid #d0d0d0; border-bottom: 2px solid #2b579a; }
.grp { display: flex; flex-direction: column; flex: none; border-right: 1px solid #d2d2d2; color: #333; }
.clip { width: 122px; }
.sys { width: 85px; }
.edit { width: 185px; }
.parts { width: 330px; }
.arrange { width: 387px; }
.font { width: 323px; }
.state { width: 182px; }
.body { display: flex; flex: 1; }
.cap { height: 20px; margin-bottom: 2px; text-align: center; }
.big { display: flex; flex-direction: column; align-items: center; padding-top: 4px; }
.big span { margin-top: 4px; }
.clip .big { width: 50px; margin-left: 6px; }
.clip .stack { margin-left: 3px; }
.sys .big { width: 84px; }
.edit .big { width: 46px; margin-left: 4px; }
.edit .stack { margin-left: 5px; }
.navy { color: #1f3f77; margin-top: 9px; }
.small { display: flex; align-items: center; gap: 4px; height: 29px; white-space: nowrap; }
.dim { color: #9a9a9a; }

.gallery { display: flex; width: 321px; height: 87px; margin: 1px 0 0 5px; border: 1px solid #c6c6c6; background: #fff; }
.cells { display: grid; grid-template-columns: repeat(10, 30px); grid-auto-rows: 30px; place-items: center; flex: 1; overflow: hidden; }
.gscroll { display: flex; flex-direction: column; width: 18px; border-left: 1px solid #c6c6c6; background: #f4f4f4; color: #666; }
.gscroll button { display: flex; flex: 1; align-items: center; justify-content: center; border-bottom: 1px solid #c6c6c6; }
.gscroll button:last-child { border: 0; }

.rowsbody { flex-direction: column; gap: 9px; padding-top: 10px; }
.toolrow { display: flex; align-items: center; height: 29px; padding-left: 6px; }
.set { display: flex; align-items: center; height: 24px; }
.set + .set { padding-left: 1px; border-left: 1px solid #ccc; }
.tool { display: flex; align-items: center; height: 24px; padding: 0 5px 0 4px; gap: 7px; }
.caret { color: #b2b2b2; }
.flat { display: flex; align-items: center; height: 29px; border: 1px solid #acacac; color: #777; }
.flat select { appearance: none; flex: 1; padding: 0 0 0 4px; }
.flat svg { margin: 0 6px; }
.face { width: 131px; }
.size { width: 55px; margin-left: -1px; }
.st { width: 29px; height: 29px; color: #777; font: 15px/29px "Liberation Sans", sans-serif; }
.st.on { background: #c5c5c5; }
.spin { display: flex; align-items: center; width: 50px; height: 29px; border: 1px solid #acacac; background: #fff; }
.spin.wide { width: 53px; }
.spin input { flex: 1; width: 10px; padding: 0 3px; }
.ud { display: flex; flex-direction: column; gap: 9px; padding-right: 5px; color: #777; }

.work { display: flex; flex: 1; min-height: 0; background: #eceefb; }
.dock { display: flex; flex-direction: column; flex: none; width: 310px; background: #f0f0f0; font-size: 13px; }
.dock-head { display: flex; align-items: center; gap: 12px; flex: none; height: 24px; padding: 0 8px 0 4px; background: linear-gradient(#bccddd, #d8e4f0); color: #4a4a4a; }
.dock-head span { flex: 1; font-size: 14px; }
.mode { display: flex; align-items: center; gap: 6px; flex: none; height: 33px; padding: 1px 0 6px; border-bottom: 1px solid #a0a0a0; }
.mode .combo { flex: 1; }
.combo { display: flex; align-items: center; position: relative; height: 25px; border: 1px solid #707070; border-radius: 3px; background: linear-gradient(#f2f2f2, #ebebeb 48%, #dcdcdc 50%, #cecece); box-shadow: inset 0 0 0 1px #f6f6f6; }
.combo select { appearance: none; width: 100%; padding: 0 22px 0 3px; }
.combo .lg { font-size: 14px; }
.combo svg { position: absolute; right: 5px; pointer-events: none; }
.form { display: grid; grid-template-columns: 52px 1fr; column-gap: 6px; row-gap: 6px; align-items: center; padding: 8px 0 6px; flex: none; }
.form label { display: flex; justify-content: flex-end; white-space: nowrap; }
#addr { width: 100%; height: 25px; border: 1px solid #e3e9ef; border-top-color: #abadb3; background: #fff; padding: 0 4px; }
.grid-box { display: flex; flex-direction: column; flex: 1; min-height: 0; border: 1px solid #828790; }
.grid-top { display: flex; flex: 1; min-height: 0; }
.grid-clip { flex: 1; overflow: hidden; background: #fff; }
table { border-collapse: separate; border-spacing: 0; table-layout: fixed; }
th { font-weight: normal; padding: 0; }
.bits { width: 290px; font-size: 16px; }
.bits th { height: 28px; padding-top: 2px; border-right: 1px solid #e6e8ea; border-bottom: 1px solid #d5d5d5; background: linear-gradient(#fff 40%, #f1f2f4); }
.bits tbody th { height: 29px; }
.bits .rowh { width: 100px; }
.bits td { padding: 2px 0 0; }
.bits td i { display: block; width: 11px; height: 11px; margin: 0 auto; border: 1px solid #0a8a0a; background: #66ff66; }
.vbar { display: flex; flex-direction: column; align-items: center; width: 20px; padding: 8px 0; background: linear-gradient(90deg, #e6e6e6, #f0f0f0); color: #444; }
.thumb { display: flex; align-items: center; justify-content: center; border: 1px solid #989898; border-radius: 2px; background: linear-gradient(#f5f5f5, #e6e6e6 45%, #d2d3d5 50%, #c6c6c6); }
.vbar .thumb { width: 19px; background: linear-gradient(90deg, #f5f5f5, #e6e6e6 45%, #d2d3d5 50%, #c8c8c8); }
.small-thumb { height: 20px; margin-top: 9px; }
.hbar { display: flex; align-items: center; padding: 0 8px; background: linear-gradient(#e6e6e6, #f0f0f0); color: #444; }
.thumb b { width: 10px; height: 8px; background: repeating-linear-gradient(90deg, #666 0 1px, #fff 1px 2px, transparent 2px 4px); }
.vbar .thumb b { width: 8px; height: 10px; background: repeating-linear-gradient(#666 0 1px, #fff 1px 2px, transparent 2px 4px); }
.dockbar { flex: none; height: 21px; padding: 0 29px 0 7px; }
.dock-thumb { width: 218px; height: 19px; margin-left: 10px; }
.places { flex: none; height: 150px; margin-top: 6px; border: 1px solid #828790; background: #fff; }
.places table { width: 100%; }
.places th { height: 28px; border-right: 1px solid #e2e3e5; border-bottom: 1px solid #d5d5d5; background: linear-gradient(#fff 35%, #f1f2f4); }
.pos { width: 150px; }

.docs { display: flex; flex-direction: column; flex: 1; min-width: 0; margin-left: 6px; }
.tabs { display: flex; align-items: center; flex: none; height: 26px; padding: 0 14px 0 8px; background: linear-gradient(90deg, #eceefb, #f4f7ff); }
.doctab { display: flex; align-self: flex-end; margin-left: 10px; height: 25px; }
.doclabel { display: flex; align-items: center; gap: 17px; padding: 0 8px 0 7px; border-top: 1px solid #9aa0a8; border-right: 1px solid #9aa0a8; border-radius: 0 3px 0 0; background: linear-gradient(#f2faff, #bfe0fe); }
.frame { display: flex; flex: 1; min-height: 0; padding: 3px 4px 4px; border: 1px solid #9ea4ac; background: #c1dffd; }
.inner { display: grid; grid-template-columns: 20px 1fr 22px; grid-template-rows: 20px 1fr 22px; flex: 1; min-width: 0; border: 1px solid #999; background: #f0f0f0; }
.corner { display: flex; align-items: center; justify-content: center; margin: 0 1px 1px 0; border: solid #999; border-width: 0 1px 1px 0; }
.ruler-top { display: flex; justify-content: center; grid-column: 2 / 4; margin-bottom: 1px; padding-right: 22px; border-bottom: 1px solid #a0a0a0; box-shadow: inset 1px 0 #000, 0 1px #fff; }
.ruler-left { display: flex; align-items: center; margin-right: 1px; border-right: 1px solid #a0a0a0; box-shadow: inset 0 1px #000, 1px 0 #fff; }
.ruler-top svg, .ruler-left svg { overflow: visible; }
.ruler-top text, .ruler-left text { font: 10px "Liberation Sans", sans-serif; }
.view { display: flex; align-items: center; justify-content: center; min-width: 0; min-height: 0; overflow: hidden; background: #c0c0c0; }
.viewbar { width: 22px; border-left: 1px solid #fff; }
.lead { flex: 178; }
.big-thumb { flex: 360; }
.tail { flex: 176; }
.foot { margin-right: 1px; border-right: 1px solid #a0a0a0; }
.viewh { border-top: 1px solid #fff; padding: 0 8px 0 7px; }
.viewh .thumb { height: 19px; }
.side { flex: 277; }
.long-thumb { flex: 971; }

.screen { position: relative; flex: none; width: 800px; height: 480px; background: #80ffd5; box-shadow: 6px 7px 3px -1px #707070; font-weight: 300; }
.dots { position: absolute; inset: 0; }
.obj { position: absolute; margin: 0; }
.heading { left: 0; right: 0; top: 132px; padding-right: 2px; text-align: center; font-size: 53px; line-height: 53px; white-space: nowrap; }
.phone { left: 24px; top: 297px; font-size: 53px; line-height: 53px; }
.tag { color: #f00; font: 11px/12px "Liberation Sans", sans-serif; }
.tx0 { left: 29px; top: 135px; }
.tx1 { left: 24px; top: 301px; }
.keys { display: flex; gap: 27px; left: 131px; top: 383px; }
.key { position: relative; display: flex; width: 103px; height: 64px; border: solid; border-width: 7px 8px 5px 7px; border-color: #fff #999a9e #808487 #fff; background: #fff; padding: 0 5px 3px 4px; font-weight: 400; }
.key .tag { position: absolute; left: -5px; top: -4px; white-space: nowrap; }
.face-red { display: flex; align-items: center; justify-content: center; flex: 1; min-width: 0; height: 49px; border: 4px solid; border-color: #a43a3e #5a2226 #e67a7a #5a2226; background: radial-gradient(#d94f4e 30%, #a93236); box-shadow: inset 0 4px 3px #e88; font-size: 20px; line-height: 24px; white-space: nowrap; }
.cross { left: 380px; top: 220px; }

.status { display: flex; flex: none; height: 31px; padding: 3px 0 2px; border-top: 1px solid #f6f6f6; font-size: 16px; line-height: 24px; white-space: nowrap; }
.status > span { flex: none; border-right: 2px solid #a8a8a8; padding-left: 7px; }
.status .s-model { width: 437px; padding-left: 1px; }
.s-a { width: 215px; }
.status .s-b { flex: 1; }
.s-c { width: 110px; }
.s-x { width: 85px; }
.s-d { width: 31px; }
.s-cap { width: 45px; }
.s-num { width: 53px; }
.off { color: #a8a8a8; font-size: 15px; }
.status .s-zoom { display: flex; align-items: center; justify-content: space-between; width: 207px; padding-right: 8px; border: 0; }
.zoomer { display: flex; flex-direction: column; gap: 3px; width: 90px; }
.zoomer input { appearance: none; width: 90px; height: 14px; background: linear-gradient(#bbb, #bbb) center / 100% 2px no-repeat; }
.zoomer input::-webkit-slider-thumb { appearance: none; width: 9px; height: 14px; border: 1px solid #999; border-radius: 4px 4px 1px 1px; background: #e4e4e4; }

.taskbar { display: flex; flex: none; height: 9px; border-top: 1px solid #0b1a2a; background: linear-gradient(90deg, #2d6489 0, #4484a5 18%, #3b7ba5 50%, #134a85 76%, #0e3f78); overflow: hidden; }
.pins { flex: none; width: 352px; }
.task { display: flex; flex: none; width: 159px; padding: 3px 0 0 16px; border: solid #17304a; border-width: 0 1px 0 1px; box-shadow: inset 1px 1px #d8e8f2; background: linear-gradient(100deg, #bcd2df, #5e95b3 50%, #7eaac3); }
.task i { width: 27px; height: 20px; border-radius: 50% 50% 0 0; }
.t1 i { background: #e53e30; }
.t2 i { background: #1f8fee; }
.t3 i { background: #fff; border-radius: 5px; width: 37px; }
.t5 i { background: repeating-linear-gradient(90deg, #1a1aa8 0 5px, transparent 5px 10px); border-radius: 0; margin-top: 3px; }
.t6 { background: linear-gradient(#e5ecf4, #aebfd6); }
.t6 i { background: #eef5ee; }
.t7 { background: linear-gradient(90deg, #c4d0e2, #3d6796); }
.t7 i { width: 40px; background: #9fadd8; border: 2px solid #111; border-radius: 4px; }
.peek { width: 15px; border-left: 1px solid #0b2747; background: #3c6492; }

.scribble { position: absolute; left: 0; top: 252px; pointer-events: none; }
.monitor { position: absolute; right: 0; top: 727px; display: flex; flex-direction: column; align-items: center; width: 54px; height: 163px; padding: 10px 0 0 4px; border-radius: 10px 0 0 10px; background: #7a7c82b8; color: #fff; }
.load { display: flex; align-items: flex-end; justify-content: center; height: 38px; padding-left: 2px; }
.load b { font-size: 18px; line-height: 30px; }
.load small { font-size: 12px; color: #ccc; }
.meter { width: 35px; height: 5px; border-radius: 3px; background: #4b4e57; overflow: hidden; }
.meter i { display: block; width: 65%; height: 5px; background: linear-gradient(90deg, #3fc1a8, #a3c23c, #f0b90b); }
.net { display: flex; align-items: center; gap: 7px; width: 42px; height: 34px; }
.meter + .net { margin-top: 12px; }
.net span { font-size: 13px; line-height: 17px; }
.net small { display: block; font-size: 12px; line-height: 17px; color: #c8cacf; }
.mark { position: absolute; right: 14px; bottom: 8px; font-size: 20px; line-height: 24px; color: #d9d9d9c0; text-shadow: 1px 1px 1px #777; pointer-events: none; }
</style>
